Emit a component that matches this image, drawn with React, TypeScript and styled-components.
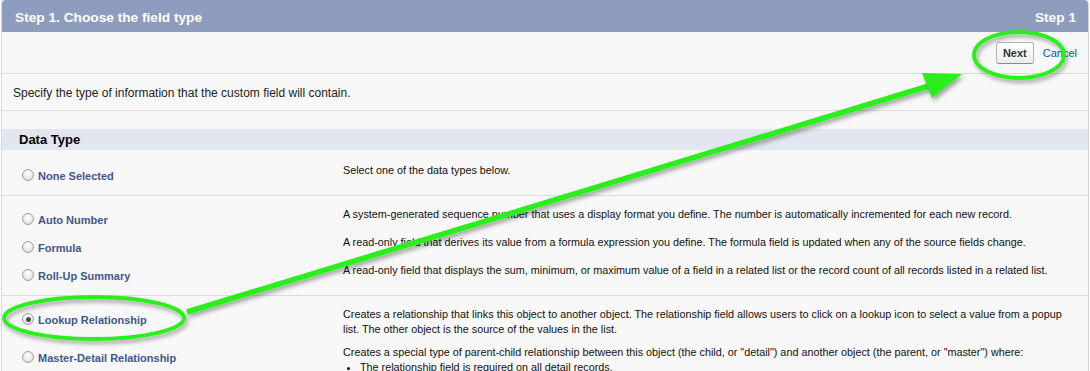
import React from 'react';
import styled, { createGlobalStyle } from 'styled-components';

const GlobalStyle = createGlobalStyle`
  html, body {
    margin: 0;
    padding: 0;
    background: #ffffff;
    overflow: hidden;
  }
  body {
    font-family: 'Liberation Sans', Arial, sans-serif;
  }
`;

const Page = styled.div`
    position: relative;
    width: 1090px;
    height: 371px;
    overflow: hidden;
`;

const Panel = styled.div`
    margin-left: 1px;
    width: 1086px;
    background: #f8f8f8;
    border: 1px solid #d4dadc;
    border-top: none;
    border-radius: 4px 4px 0 0;
`;

const Header = styled.div`
    height: 32px;
    display: flex;
    justify-content: space-between;
    align-items: center;
    padding: 2px 12px 0 13px;
    box-sizing: border-box;
    background: #8e9dbe;
    border-radius: 4px 4px 0 0;
    color: #ffffff;
    font-weight: bold;
    font-size: 13.7px;
`;

const ButtonBar = styled.div`
    height: 41px;
    display: flex;
    justify-content: flex-end;
    align-items: center;
    gap: 9px;
    padding-right: 11px;
    border-bottom: 1px solid #dbdbdb;
`;

const Button = styled.button`
    height: 22px;
    padding: 0 6px;
    border: 1px solid #b5b5b5;
    border-bottom-color: #8a8a8a;
    border-radius: 3px;
    background: linear-gradient(#ffffff, #ececec);
    color: #333333;
    font-family: inherit;
    font-weight: bold;
    font-size: 11px;
`;

const CancelLink = styled.a`
    color: #015ba7;
    font-size: 11px;
`;

const Instructions = styled.div`
    height: 35px;
    display: flex;
    align-items: center;
    padding: 1px 0 0 11px;
    border-bottom: 1px solid #dbdbdb;
    color: #222222;
    font-size: 12px;
`;

const Section = styled.div`
    margin-top: 18px;
`;

const SectionTitle = styled.div`
    height: 21px;
    display: flex;
    align-items: center;
    padding-left: 17px;
    background: #e3e6ee;
    color: #000000;
    font-weight: bold;
    font-size: 13px;
`;

const Group = styled.div<{ $first: boolean }>`
    padding: ${(p) => (p.$first ? '9px' : '7px')} 0 8px;
    border-bottom: 1px solid #dbdbdb;
`;

const Row = styled.div`
    display: grid;
    grid-template-columns: 341px 1fr;
    align-items: start;
`;

const LabelCell = styled.div`
    display: flex;
    align-items: center;
    gap: 4px;
    padding: 10px 0 3px 20px;
    line-height: 15px;
`;

const Radio = styled.span<{ $checked: boolean }>`
    width: 12px;
    height: 12px;
    border-radius: 50%;
    border: 1px solid #a0a0a0;
    background: radial-gradient(circle at 50% 35%, #ffffff 0%, #e8e8e8 60%, #cfcfcf 100%);
    display: inline-flex;
    align-items: center;
    justify-content: center;
    box-sizing: border-box;
    flex: none;
    margin-top: -3px;

    &::after {
        content: '';
        display: ${(p) => (p.$checked ? 'block' : 'none')};
        width: 5px;
        height: 5px;
        border-radius: 50%;
        background: #4a4a4a;
    }
`;

const Label = styled.span`
    color: #40578c;
    font-weight: bold;
    font-size: 11px;
`;

const Description = styled.div`
    padding: 4px 12px 4px 0;
    color: #111111;
    font-size: 10.8px;
    line-height: 15px;
`;

const Bullets = styled.ul`
    margin: 0;
    padding-left: 17px;
`;

const Annotations = styled.svg`
    position: absolute;
    left: 0;
    top: 0;
    pointer-events: none;
`;

interface FieldType {
    label: string;
    checked?: boolean;
    description: React.ReactNode;
}

const groups: FieldType[][] = [
    [
        { label: 'None Selected', description: 'Select one of the data types below.' },
    ],
    [
        { label: 'Auto Number', description: 'A system-generated sequence number that uses a display format you define. The number is automatically incremented for each new record.' },
        { label: 'Formula', description: 'A read-only field that derives its value from a formula expression you define. The formula field is updated when any of the source fields change.' },
        { label: 'Roll-Up Summary', description: 'A read-only field that displays the sum, minimum, or maximum value of a field in a related list or the record count of all records listed in a related list.' },
    ],
    [
        {
            label: 'Lookup Relationship',
            checked: true,
            description: 'Creates a relationship that links this object to another object. The relationship field allows users to click on a lookup icon to select a value from a popup list. The other object is the source of the values in the list.',
        },
        {
            label: 'Master-Detail Relationship',
            description: (
                <>
                    Creates a special type of parent-child relationship between this object (the child, or "detail") and another object (the parent, or "master") where:
                    <Bullets>
                        <li>The relationship field is required on all detail records.</li>
                        <li>The ownership and sharing of a detail record are determined by the master record.</li>
                    </Bullets>
                </>
            ),
        },
    ],
];

export default function App() {
    return (
        <Page>
            <GlobalStyle />
            <Panel>
                <Header>
                    <span>Step 1. Choose the field type</span>
                    <span>Step 1</span>
                </Header>
                <ButtonBar>
                    <Button>Next</Button>
                    <CancelLink>Cancel</CancelLink>
                </ButtonBar>
                <Instructions>Specify the type of information that the custom field will contain.</Instructions>
                <Section>
                    <SectionTitle>Data Type</SectionTitle>
                    {groups.map((group, gi) => (
                        <Group key={gi} $first={gi === 0}>
                            {group.map((item) => (
                                <Row key={item.label}>
                                    <LabelCell>
                                        <Radio $checked={!!item.checked} />
                                        <Label>{item.label}</Label>
                                    </LabelCell>
                                    <Description>{item.description}</Description>
                                </Row>
                            ))}
                        </Group>
                    ))}
                </Section>
            </Panel>
            <Annotations width="1090" height="371" viewBox="0 0 1090 371">
                <defs>
                    <filter id="shadow" x="-20%" y="-40%" width="140%" height="180%">
                        <feDropShadow dx="2" dy="3" stdDeviation="2" floodColor="#000" floodOpacity="0.35" />
                    </filter>
                </defs>
                <g filter="url(#shadow)" fill="none" stroke="#2cef1b">
                    <ellipse cx="1019" cy="55" rx="45" ry="23" strokeWidth="3.8" />
                    <ellipse cx="94" cy="318" rx="90" ry="21" strokeWidth="3.8" />
                    <line x1="187" y1="312" x2="932" y2="85" strokeWidth="5.5" />
                </g>
                <polygon points="922,73 962,74 932,98" fill="#2cef1b" filter="url(#shadow)" />
            </Annotations>
        </Page>
    );
}
